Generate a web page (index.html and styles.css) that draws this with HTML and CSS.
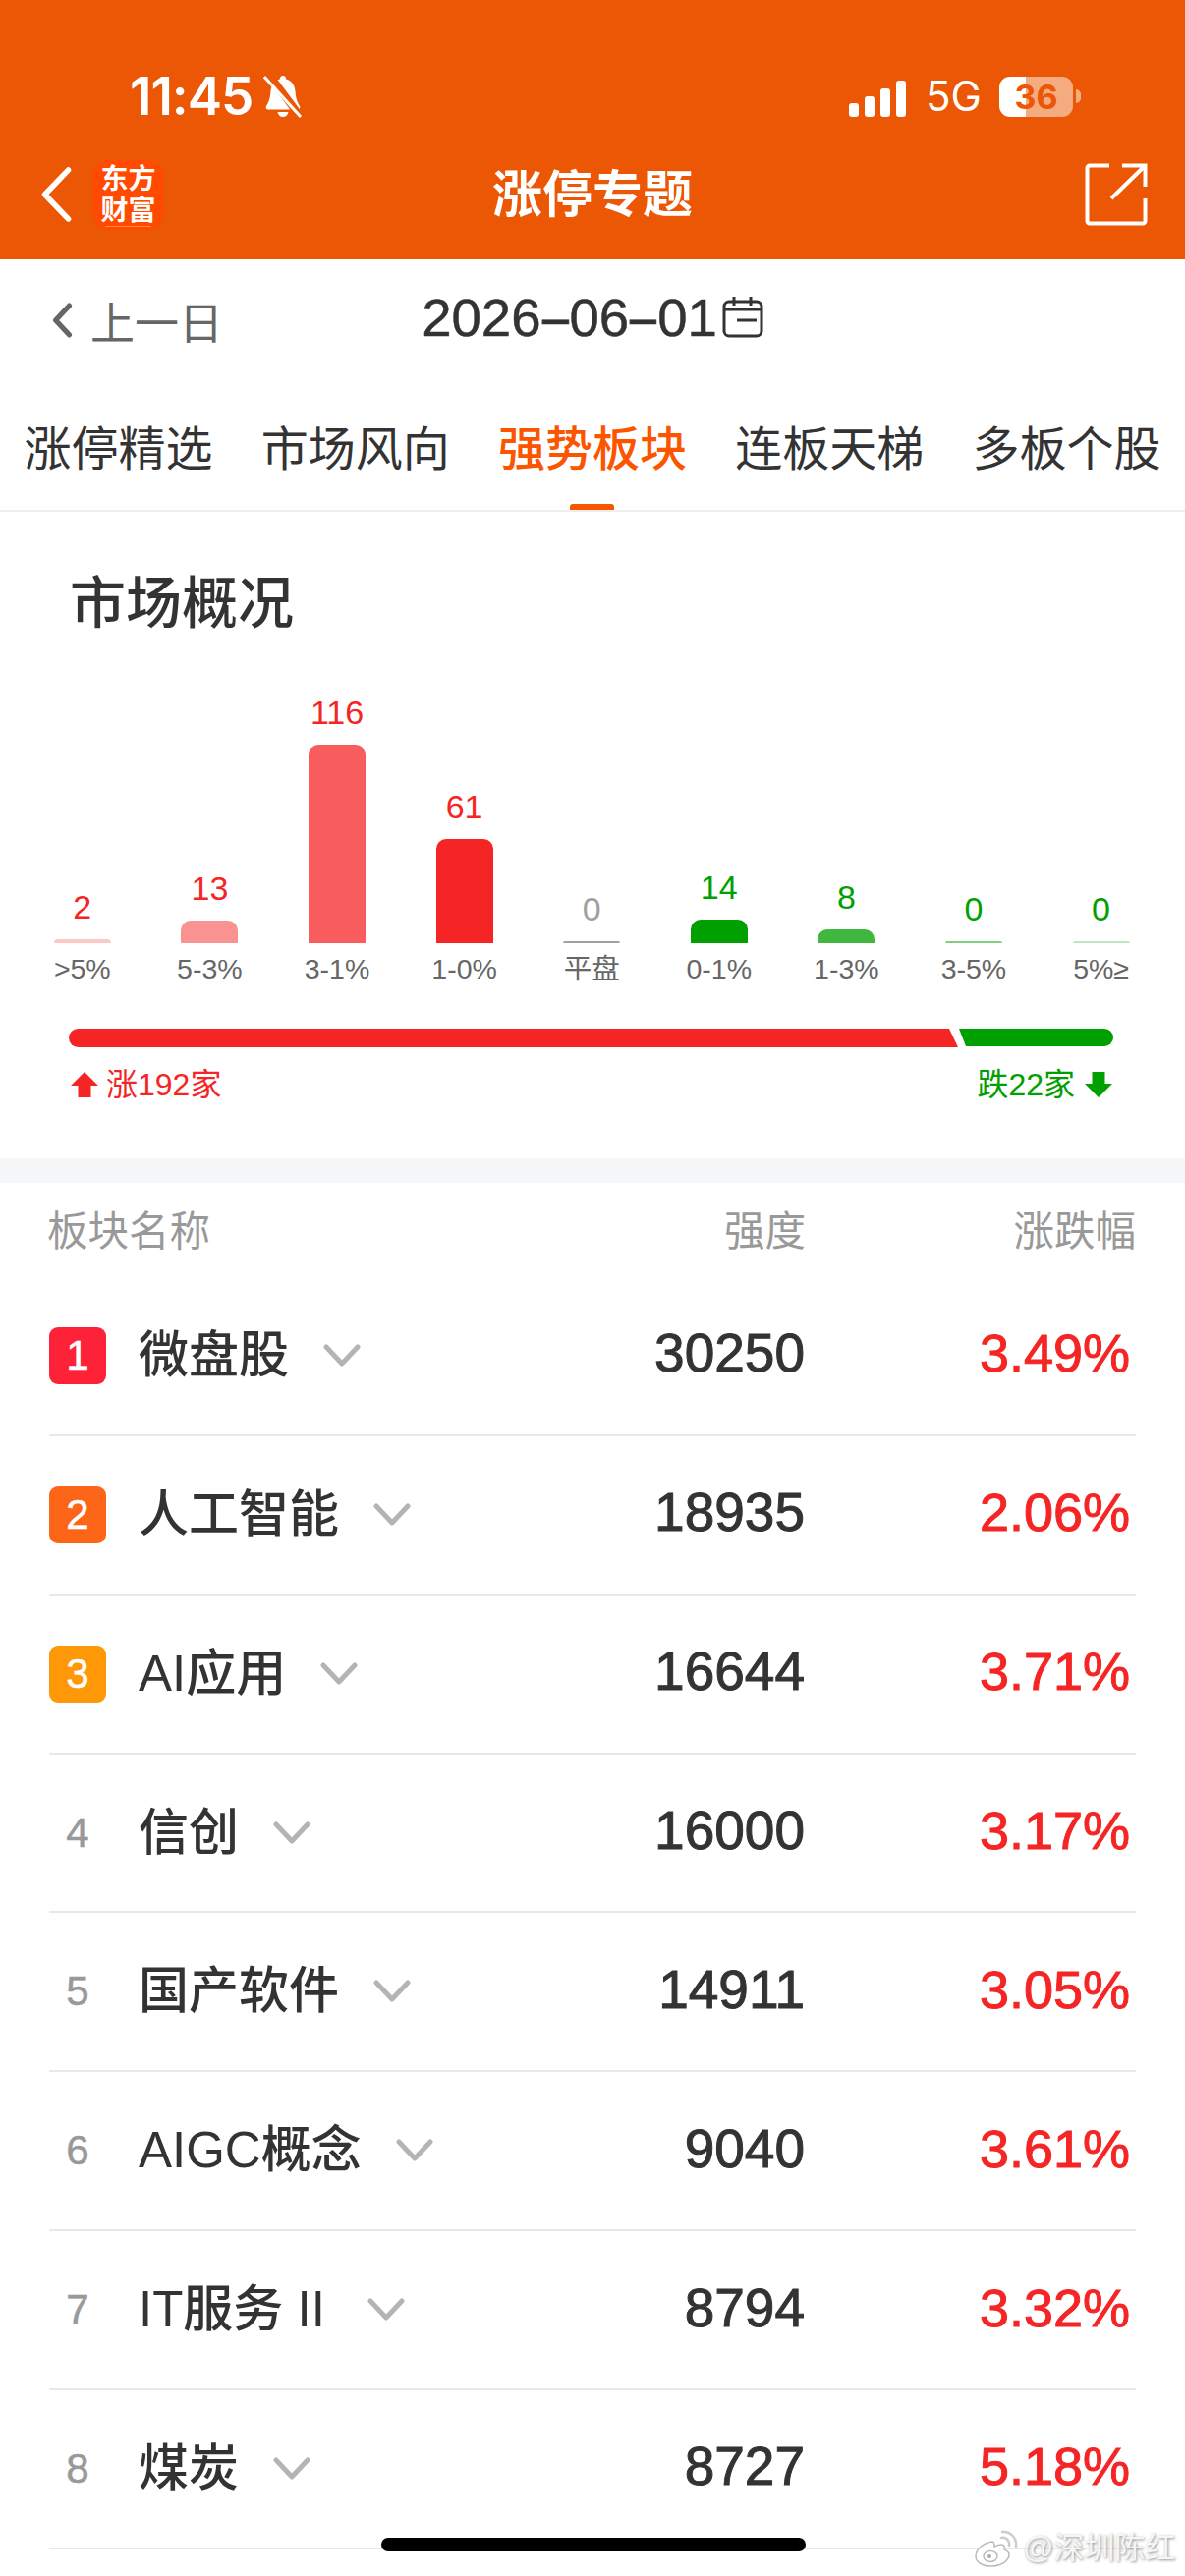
FILE: index.html
```html
<!DOCTYPE html>
<html lang="zh">
<head>
<meta charset="utf-8">
<title>涨停专题</title>
<link rel="stylesheet" href="styles.css">
</head>
<body>
<div class="page">
  <header class="top">
    <div class="status">
      <div class="status-left">
        <span class="time">11:45</span>
        <svg class="bell" viewBox="0 0 40 44"><path d="M20 1c2 0 3 1.500 3.300 3.500C29 6 32 11 32.500 17c.4 6 1.500 10 4.500 15 1 2 0 3.500-2 3.500H5c-2 0-3-1.500-2-3.500 3-5 4.100-9 4.500-15C8 11 11 6 16.700 4.500 17 2.500 18 1 20 1zM14.500 38h11c-.5 3-2.700 5-5.500 5s-5-2-5.500-5z" fill="#fff"/><path d="M5 -1l32 43" stroke="#eb5704" stroke-width="8"/><path d="M1 2l37 41" stroke="#fff" stroke-width="3"/></svg>
      </div>
      <div class="status-right">
        <svg class="signal" viewBox="0 0 58 37"><rect x="0" y="23" width="10" height="14" rx="3"/><rect x="16" y="16" width="10" height="21" rx="3"/><rect x="32" y="8" width="10" height="29" rx="3"/><rect x="48" y="0" width="10" height="37" rx="3"/></svg>
        <span class="net">5G</span>
        <div class="battery"><span class="battery-num">36</span></div>
        <span class="battery-cap"></span>
      </div>
    </div>
    <nav class="nav">
      <div class="nav-left">
        <svg class="back" viewBox="0 0 30 54"><path d="M27 3L4 27l23 24" fill="none" stroke="#fff" stroke-width="5.500" stroke-linecap="round" stroke-linejoin="round"/></svg>
        <div class="logo"><span>东方</span><span>财富</span></div>
      </div>
      <h1 class="title">涨停专题</h1>
      <svg class="share" viewBox="0 0 64 64"><path d="M25 2.500H5A2.500 2.500 0 0 0 2.500 5v54A2.500 2.500 0 0 0 5 61.500h54a2.500 2.500 0 0 0 2.500-2.500V36" fill="none" stroke="#fff" stroke-width="4"/><path d="M38 2.500h23.500V24M61 3L27 36" fill="none" stroke="#fff" stroke-width="4"/></svg>
    </nav>
  </header>

  <div class="date-row">
    <div class="prev">
      <svg class="prev-icon" viewBox="0 0 20 34"><path d="M17 3L4 17l13 14" fill="none" stroke="#666" stroke-width="5" stroke-linecap="round" stroke-linejoin="round"/></svg>
      <span>上一日</span>
    </div>
    <div class="date">
      <span class="date-text">2026<span class="dash">-</span>06<span class="dash">-</span>01</span>
      <svg class="cal" viewBox="0 0 42 42"><rect x="2" y="5" width="38" height="35" rx="5" fill="none" stroke="#333" stroke-width="3"/><path d="M2 13h38M12 0v9M29 0v9M15 24h20" fill="none" stroke="#333" stroke-width="3"/></svg>
    </div>
    <div></div>
  </div>

  <div class="tabs">
    <div class="tab">涨停精选</div>
    <div class="tab">市场风向</div>
    <div class="tab tab-active">强势板块</div>
    <div class="tab">连板天梯</div>
    <div class="tab">多板个股</div>
  </div>

  <section class="overview">
    <h2 class="ov-title">市场概况</h2>
    <div class="chart">
      <div class="col up"><span class="val">2</span><div class="bar b25" style="height:4px"></div></div>
      <div class="col up"><span class="val">13</span><div class="bar b50" style="height:23px"></div></div>
      <div class="col up"><span class="val">116</span><div class="bar b75" style="height:202px"></div></div>
      <div class="col up"><span class="val">61</span><div class="bar" style="height:106px"></div></div>
      <div class="col flat"><span class="val">0</span><div class="bar" style="height:2px"></div></div>
      <div class="col down"><span class="val">14</span><div class="bar" style="height:24px"></div></div>
      <div class="col down"><span class="val">8</span><div class="bar b75" style="height:14px"></div></div>
      <div class="col down"><span class="val">0</span><div class="bar b50" style="height:2px"></div></div>
      <div class="col down"><span class="val">0</span><div class="bar b25" style="height:2px"></div></div>
    </div>
    <div class="cats">
      <span>&gt;5%</span><span>5-3%</span><span>3-1%</span><span>1-0%</span><span>平盘</span><span>0-1%</span><span>1-3%</span><span>3-5%</span><span>5%≥</span>
    </div>
    <div class="ratio"><div class="ratio-up"></div><div class="ratio-down"></div></div>
    <div class="ratio-labels">
      <div class="rl-up">
        <svg class="arrow" viewBox="0 0 28 26"><path d="M14 0l14 14h-7.500v12h-13V14H0z" fill="#f52525"/></svg>
        <span>涨192家</span>
      </div>
      <div class="rl-down">
        <span>跌22家</span>
        <svg class="arrow" viewBox="0 0 28 26"><path d="M14 26L0 12h7.500V0h13v12H28z" fill="#00a000"/></svg>
      </div>
    </div>
  </section>

  <div class="band"></div>

  <div class="thead">
    <span class="th-name">板块名称</span>
    <span class="th-num">强度</span>
    <span class="th-pct">涨跌幅</span>
  </div>

  <div class="row"><span class="rank r1">1</span><span class="name">微盘股</span><svg class="chev" viewBox="0 0 38 24"><path d="M3 3l16 17L35 3" /></svg><span class="num">30250</span><span class="pct">3.49%</span></div>
  <div class="row"><span class="rank r2">2</span><span class="name">人工智能</span><svg class="chev" viewBox="0 0 38 24"><path d="M3 3l16 17L35 3" /></svg><span class="num">18935</span><span class="pct">2.06%</span></div>
  <div class="row"><span class="rank r3">3</span><span class="name">AI应用</span><svg class="chev" viewBox="0 0 38 24"><path d="M3 3l16 17L35 3" /></svg><span class="num">16644</span><span class="pct">3.71%</span></div>
  <div class="row"><span class="rank">4</span><span class="name">信创</span><svg class="chev" viewBox="0 0 38 24"><path d="M3 3l16 17L35 3" /></svg><span class="num">16000</span><span class="pct">3.17%</span></div>
  <div class="row"><span class="rank">5</span><span class="name">国产软件</span><svg class="chev" viewBox="0 0 38 24"><path d="M3 3l16 17L35 3" /></svg><span class="num">14911</span><span class="pct">3.05%</span></div>
  <div class="row"><span class="rank">6</span><span class="name">AIGC概念</span><svg class="chev" viewBox="0 0 38 24"><path d="M3 3l16 17L35 3" /></svg><span class="num">9040</span><span class="pct">3.61%</span></div>
  <div class="row"><span class="rank">7</span><span class="name">IT服务 II</span><svg class="chev chev-far" viewBox="0 0 38 24"><path d="M3 3l16 17L35 3" /></svg><span class="num">8794</span><span class="pct">3.32%</span></div>
  <div class="row"><span class="rank">8</span><span class="name">煤炭</span><svg class="chev" viewBox="0 0 38 24"><path d="M3 3l16 17L35 3" /></svg><span class="num">8727</span><span class="pct">5.18%</span></div>

  <div class="home"></div>
  <div class="watermark">
    <svg class="weibo" viewBox="0 0 44 38"><path d="M18 12c-9 1-17 8-17 15 0 6 7 10 16 10s18-5 18-12c0-3-3-4-5-5 1-3 0-5-3-5-2 0-5 1-7 2 0-3-1-5-2-5z" fill="#fff" stroke="#bbb" stroke-width="1.500"/><ellipse cx="16" cy="27" rx="7" ry="5.500" fill="#fff" stroke="#bbb" stroke-width="1.500"/><circle cx="15" cy="27" r="2" fill="#aaa"/><path d="M27 8c5-1 9 3 8 8M28 2c8-1 15 6 14 15" fill="none" stroke="#ccc" stroke-width="2.500" stroke-linecap="round"/></svg>
    <span>@深圳陈红</span>
  </div>
</div>
</body>
</html>
```
FILE: styles.css
```css
* { box-sizing: border-box; }
html, body { margin: 0; padding: 0; background: #fff; }
body { font-family: "Liberation Sans", "Noto Sans CJK SC", sans-serif; color: #333; }
.page { position: relative; width: 1206px; height: 2622px; overflow: hidden; background: #fff; }

.top { height: 264px; background: #eb5704; color: #fff; }
.status { height: 150px; padding: 70px 106px 0 132px; display: flex; justify-content: space-between; align-items: flex-start; font-family: Inter, sans-serif; }
.status-left { display: flex; align-items: center; gap: 11px; height: 56px; }
.time { font-size: 53px; font-weight: 600; line-height: 56px; letter-spacing: -1px; }
.bell { width: 40px; height: 44px; }
.status-right { display: flex; align-items: center; height: 56px; }
.signal { width: 58px; height: 37px; fill: #fff; margin-top: 4px; }
.net { font-size: 42px; line-height: 56px; margin-left: 20px; width: 75px; }
.battery { width: 75px; height: 41px; border-radius: 11px; background: linear-gradient(90deg, #fff 0, #fff 27px, #f5ab80 27px, #f5ab80 100%); display: flex; align-items: center; justify-content: center; }
.battery-num { font-size: 34px; font-weight: 700; color: #eb5704; line-height: 41px; }
.battery-cap { width: 5px; height: 14px; background: #f5ab80; border-radius: 0 5px 5px 0; margin-left: 3px; }

.nav { height: 114px; padding: 0 38px 0 41px; position: relative; display: flex; align-items: flex-start; justify-content: space-between; }
.nav-left { display: flex; align-items: center; gap: 22px; height: 70px; margin-top: 13px; }
.back { width: 32px; height: 56px; }
.logo { position: relative; width: 71px; height: 71px; border-radius: 16px; background: #ff4a00; display: flex; flex-direction: column; align-items: center; justify-content: center; color: #fff; font-size: 28px; font-weight: 700; line-height: 32px; padding-top: 1px; }
.logo::after { content: ""; position: absolute; left: 12px; right: 12px; bottom: 3px; height: 1px; background: #ff8a50; }
.title { position: absolute; left: 0; right: 0; top: 19px; margin: 0; text-align: center; font-size: 51px; line-height: 60px; font-weight: 700; }
.share { width: 64px; height: 64px; margin-top: 16px; }

.date-row { height: 136px; display: grid; grid-template-columns: 1fr auto 1fr; align-items: flex-start; }
.prev { display: flex; align-items: center; gap: 18px; padding-left: 52px; margin-top: 32px; height: 60px; color: #666; font-size: 45px; }
.prev-icon { width: 22px; height: 36px; }
.date { display: flex; align-items: center; gap: 5px; height: 60px; margin-top: 29px; font-size: 54.500px; color: #333; }
.date-text { -webkit-text-stroke: 0.5px #333; }
.dash { display: inline-block; width: 29px; text-align: center; transform: scaleX(2); }
.cal { width: 42px; height: 42px; }

.tabs { display: grid; grid-template-columns: repeat(5, 1fr); height: 121px; border-bottom: 2px solid #eee; }
.tab { text-align: center; font-size: 48px; line-height: 70px; padding-top: 23px; color: #333; position: relative; }
.tab-active { color: #fc5500; font-weight: 500; }
.tab-active::after { content: ""; position: absolute; left: 50%; bottom: 0; margin-left: -23px; width: 45px; height: 6px; border-radius: 3px 3px 0 0; background: #fc5500; }

.overview { height: 658px; padding-top: 53px; }
.ov-title { margin: 0; padding-left: 71px; font-size: 57px; line-height: 80px; font-weight: 500; color: #333; }
.chart { height: 306px; display: grid; grid-template-columns: repeat(9, 129.600px); padding-left: 19px; align-items: end; }
.col { display: flex; flex-direction: column; align-items: center; }
.val { font-size: 34px; line-height: 40px; margin-bottom: 13px; }
.bar { width: 58px; border-radius: 10px 10px 0 0; }
.up .val { color: #f52525; }
.up .bar { background: #f52525; }
.down .val { color: #00a000; }
.down .bar { background: #00a000; }
.flat .val { color: #a0a0a0; }
.flat .bar { background: #a0a0a0; }
.b25 { opacity: 0.25; }
.b50 { opacity: 0.5; }
.b75 { opacity: 0.75; }
.cats { display: grid; grid-template-columns: repeat(9, 129.600px); padding-left: 19px; margin-top: 6px; font-size: 28.500px; line-height: 40px; color: #666; text-align: center; }
.ratio { display: flex; margin: 41px 73px 0 70px; height: 19px; }
.ratio-up { width: 906px; height: 19px; background: #f52525; border-radius: 10px 0 0 10px; clip-path: polygon(0 0, 896px 0, 905px 100%, 0 100%); }
.ratio-down { flex: 1; height: 18px; background: #00a000; border-radius: 0 10px 10px 0; clip-path: polygon(0 0, 100% 0, 100% 100%, 7px 100%); }
.ratio-labels { display: flex; justify-content: space-between; margin: 18px 74px 0 72px; font-size: 32px; line-height: 40px; }
.rl-up { display: flex; align-items: center; gap: 8px; color: #f52525; }
.rl-down { display: flex; align-items: center; gap: 10px; color: #00a000; }
.arrow { width: 28px; height: 26px; }

.band { height: 25px; background: #f6f7f9; }

.thead { height: 96px; padding: 0 50px 4px 48px; display: flex; align-items: center; color: #999; font-size: 41.500px; }
.th-name { flex: 1; }
.th-num { width: 200px; text-align: right; }
.th-pct { width: 336px; text-align: right; }

.row { height: 161.860px; margin: 0 50px; border-bottom: 2px solid #e8e8e8; display: flex; align-items: center; }
.rank { width: 58px; height: 58px; border-radius: 9px; display: flex; align-items: center; justify-content: center; font-size: 42px; line-height: 58px; color: #999; -webkit-text-stroke: 0.5px currentColor; }
.r1 { background: #fd2238; color: #fff; }
.r2 { background: #fd6518; color: #fff; }
.r3 { background: #ff9807; color: #fff; }
.name { margin-left: 33px; font-size: 51px; font-weight: 500; color: #333; line-height: 70px; }
.chev { width: 38px; height: 24px; margin-left: 35px; fill: none; stroke: #b4b4b4; stroke-width: 5; stroke-linecap: round; stroke-linejoin: round; }
.chev-far { margin-left: 43px; }
.num { margin-left: auto; padding-bottom: 5px; font-size: 55px; color: #333; -webkit-text-stroke: 1px #333; }
.pct { width: 331px; text-align: right; margin-right: 6px; padding-bottom: 5px; font-size: 54px; color: #f52525; -webkit-text-stroke: 1px #f52525; }

.home { position: absolute; left: 388px; top: 2583px; width: 432px; height: 14px; border-radius: 7px; background: #000; }
.watermark { position: absolute; left: 992px; top: 2572px; display: flex; align-items: center; gap: 5px; color: #f6f6f6; font-size: 31px; line-height: 44px; white-space: nowrap; text-shadow: 1px 1px 3px rgba(0, 0, 0, 0.45); }
.weibo { width: 44px; height: 38px; flex: none; }
```
